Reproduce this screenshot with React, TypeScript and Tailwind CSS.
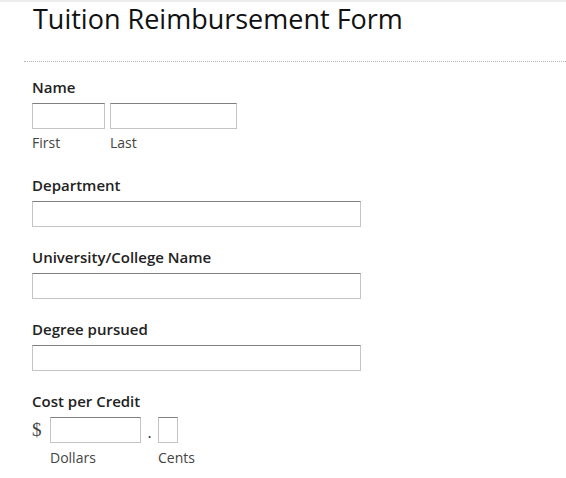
import React from 'react';

const font = { fontFamily: '"Open Sans", "Liberation Sans", sans-serif' };

const inputCls =
  'h-[26px] border border-[#c4c4c4] border-t-[#7f7f7f] bg-white outline-none px-1 text-[14px]';

const labelCls = 'text-[15px] leading-[20px] font-semibold text-[#222] pt-[2px] mb-[6px]';
const subCls = 'text-[14px] leading-[18px] text-[#444]';

const Field = ({ label, children }: { label: string; children: React.ReactNode }) => (
  <div className="mb-[18px]">
    <div className={labelCls}>{label}</div>
    {children}
  </div>
);

export default function App() {
  return (
    <div className="w-[566px] h-[478px] bg-white border-t-2 border-[#ececec]" style={font}>
      <h1 className="-mt-[2px] pl-[33px] text-[27px] leading-[37px] text-[#111]">Tuition Reimbursement Form</h1>
      <div className="ml-[24px] mt-[24px] border-t border-dotted border-[#b5b5b5]" />

      <div className="pl-[32px] pt-[13px]">
        <div className="mb-[21px]">
          <div className={labelCls}>Name</div>
          <div className="flex gap-[5px]">
            <div className="flex flex-col">
              <input className={`${inputCls} w-[73px]`} />
              <span className={`mt-[5px] ${subCls}`}>First</span>
            </div>
            <div className="flex flex-col">
              <input className={`${inputCls} w-[127px]`} />
              <span className={`mt-[5px] ${subCls}`}>Last</span>
            </div>
          </div>
        </div>

        <Field label="Department">
          <input className={`${inputCls} w-[329px] block`} />
        </Field>
        <Field label="University/College Name">
          <input className={`${inputCls} w-[329px] block`} />
        </Field>
        <Field label="Degree pursued">
          <input className={`${inputCls} w-[329px] block`} />
        </Field>

        <div>
          <div className={labelCls}>Cost per Credit</div>
          <div className="flex items-start">
            <span
              className="w-[18px] h-[26px] leading-[26px] text-[19px] text-[#444]"
              style={{ fontFamily: '"Liberation Serif", serif' }}
            >
              $
            </span>
            <div className="flex flex-col">
              <input className={`${inputCls} w-[91px]`} />
              <span className={`mt-[6px] ${subCls}`}>Dollars</span>
            </div>
            <span className="w-[17px] h-[26px] leading-[30px] text-center text-[16px] text-[#333]">.</span>
            <div className="flex flex-col">
              <input className={`${inputCls} w-[20px] px-0`} />
              <span className={`mt-[6px] ${subCls}`}>Cents</span>
            </div>
          </div>
        </div>
      </div>
    </div>
  );
}
